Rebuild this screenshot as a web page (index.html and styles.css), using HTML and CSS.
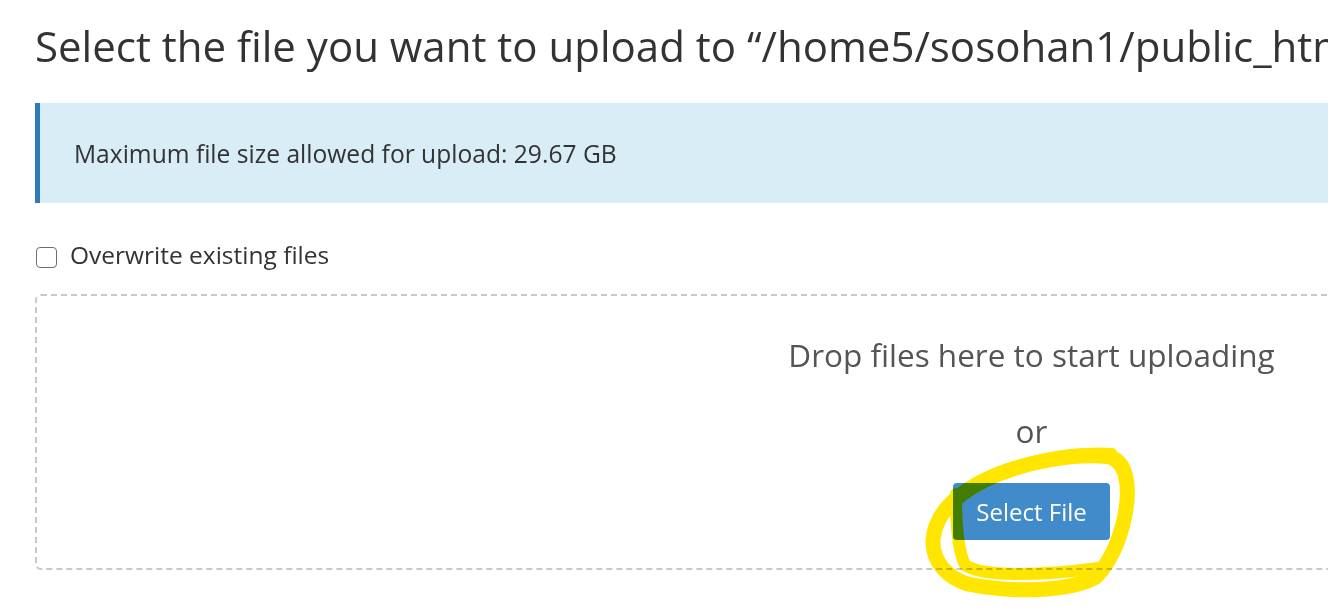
FILE: index.html
```html
<!DOCTYPE html>
<html lang="en">
<head>
<meta charset="utf-8">
<title>Upload</title>
<link rel="stylesheet" href="styles.css">
</head>
<body>
<div class="page">
  <h1 class="title">Select the file you want to upload to “/home5/sosohan1/public_html”.</h1>
  <div class="alert">Maximum file size allowed for upload: 29.67 GB</div>
  <label class="overwrite"><input type="checkbox" class="check"><span class="overwrite-text">Overwrite existing files</span></label>
  <div class="dropzone">
    <p class="drop-msg">Drop files here to start uploading</p>
    <p class="drop-or">or</p>
    <button class="select-btn" type="button">Select File</button>
  </div>
</div>
<svg class="annotation" width="1328" height="612" viewBox="0 0 1328 612">
  <path class="scribble" d="M 968 584 C 948 578, 932 562, 933 540 C 935 514, 955 495, 985 480 C 1020 463, 1075 452, 1110 457 C 1130 463, 1129 495, 1125 515 C 1120 540, 1110 562, 1096 577 C 1070 592, 1010 593, 968 584"/>
  <path class="scribble thin" d="M 956 494 C 956 520, 957 548, 965 565 C 982 577, 1040 576, 1098 568"/>
  <path class="scribble top" d="M 978 481 C 1015 462, 1070 450, 1112 453"/>
</svg>
</body>
</html>
```

FILE: styles.css
```css
html, body {
  margin: 0;
  padding: 0;
  overflow: hidden;
  background: #fff;
}

body {
  position: relative;
  width: 1328px;
  height: 612px;
  font-family: "Open Sans", "Noto Sans", sans-serif;
  color: #333;
}

.page {
  width: 1993px;
  padding-left: 35px;
  padding-top: 17px;
}

.title {
  margin: 0 0 29px 0;
  padding-left: 0;
  font-size: 42px;
  line-height: 57px;
  font-weight: 400;
  white-space: nowrap;
  color: #333;
}

.alert {
  background: #d9edf7;
  border-left: 5px solid #2f7ab8;
  padding: 34px 0 33px 34px;
  font-size: 24.6px;
  line-height: 33px;
  color: #333;
}

.overwrite {
  display: flex;
  align-items: flex-start;
  margin-top: 35px;
  font-size: 24.5px;
  line-height: 33px;
  color: #333;
}

.check {
  appearance: none;
  -webkit-appearance: none;
  box-sizing: border-box;
  width: 21px;
  height: 21px;
  margin: 9px 13px 0 1px;
  border: 1.5px solid #6f6f6f;
  border-radius: 4px;
  background: #fff;
}

.dropzone {
  display: flex;
  flex-direction: column;
  align-items: center;
  margin-top: 23px;
  border: 2px dashed #c8c8c8;
  border-radius: 6px;
  padding: 37px 0 28px;
}

.drop-msg,
.drop-or {
  margin: 0;
  font-size: 31.5px;
  line-height: 43px;
  color: #555;
}

.drop-or {
  margin-top: 33px;
}

.select-btn {
  margin-top: 31px;
  padding: 12px 23px;
  border: 0;
  border-radius: 4px;
  background: #428bca;
  color: #fff;
  font-family: "Open Sans", "Noto Sans", sans-serif;
  font-size: 24px;
  line-height: 33px;
}

.annotation {
  position: absolute;
  left: 0;
  top: 0;
  pointer-events: none;
  mix-blend-mode: multiply;
}

.scribble {
  fill: none;
  stroke: #ffe600;
  stroke-width: 15;
  stroke-linecap: round;
  stroke-linejoin: round;
}

.scribble.thin {
  stroke-width: 12;
}

.scribble.top {
  stroke-width: 10;
}
```
